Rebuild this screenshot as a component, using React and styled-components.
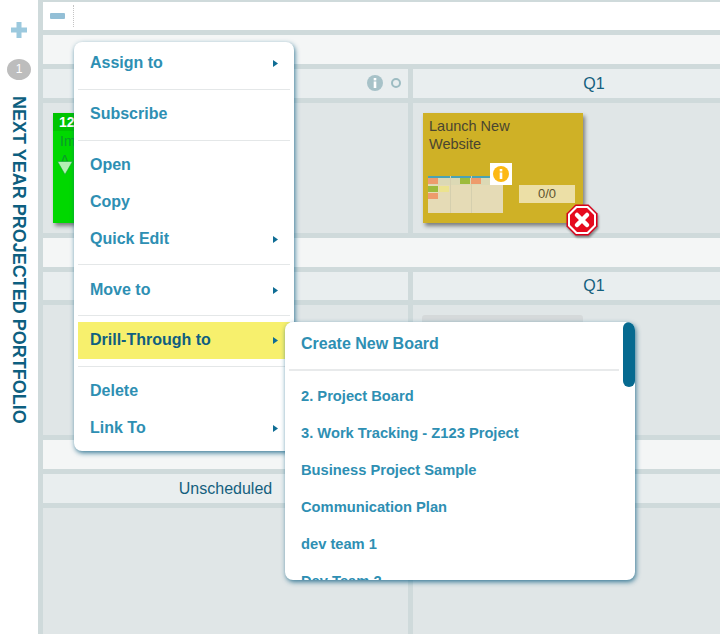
import React from "react";
import styled, { createGlobalStyle } from "styled-components";

const GlobalStyle = createGlobalStyle`
  html, body {
    margin: 0;
    padding: 0;
    background: #fff;
    font-family: "Liberation Sans", Arial, sans-serif;
  }
`;

const Page = styled.div`
  position: relative;
  display: flex;
  width: 720px;
  height: 634px;
  overflow: hidden;
`;

const Sidebar = styled.aside`
  flex: 0 0 38px;
  display: flex;
  flex-direction: column;
  align-items: center;
  padding-top: 22px;
  background: #fff;
  box-sizing: border-box;
`;

const CountBadge = styled.div`
  width: 24px;
  height: 21px;
  margin-top: 21px;
  border-radius: 50%;
  background: #bdbdbd;
  color: #fff;
  font-size: 12px;
  line-height: 21px;
  text-align: center;
`;

const SideTitle = styled.div`
  margin-top: 16px;
  margin-right: 2px;
  writing-mode: vertical-rl;
  color: #0d5f80;
  font-size: 18px;
  font-weight: 700;
  white-space: nowrap;
`;

const Board = styled.main`
  flex: 1;
  min-width: 0;
  display: flex;
  flex-direction: column;
  gap: 5px;
  padding: 2px 0 0 5px;
  background: #cfdadb;
  box-sizing: border-box;
`;

const Toolbar = styled.div`
  flex: 0 0 28px;
  display: flex;
  align-items: center;
  padding-left: 7px;
  background: #fff;
`;

const ToolbarRule = styled.div`
  height: 22px;
  margin-left: 8px;
  border-left: 1px dotted #c4c4c4;
`;

const LaneBar = styled.div`
  flex: 0 0 ${(props) => props.height}px;
  background: #f4f6f6;
`;

const Columns = styled.div`
  flex: ${(props) => (props.grow ? "1" : `0 0 ${props.height}px`)};
  display: grid;
  grid-template-columns: 365px 362px;
  column-gap: 5px;
`;

const ColumnHead = styled.div`
  position: relative;
  display: flex;
  align-items: center;
  justify-content: center;
  background: #e9eeef;
  color: #14607e;
  font-size: 16px;
`;

const HeadIcons = styled.div`
  position: absolute;
  right: 7px;
  top: 6px;
  display: flex;
  align-items: center;
  gap: 8px;
`;

const StatusDot = styled.span`
  width: 6px;
  height: 6px;
  border: 2px solid #9dbcc2;
  border-radius: 50%;
`;

const Cell = styled.div`
  position: relative;
  display: flex;
  padding: 10px;
  min-height: 0;
  background: #e0e6e7;
  box-sizing: border-box;
`;

const GreenCard = styled.div`
  width: 160px;
  height: 110px;
  background: #00d800;
  box-shadow: 2px 3px 4px rgba(0, 0, 0, 0.45);
  color: #0a9a2a;
  font-size: 14px;
`;

const GreenCardHead = styled.div`
  height: 18px;
  padding-left: 6px;
  background: #00c400;
  color: #fff;
  font-size: 14px;
  font-weight: 700;
  line-height: 19px;
`;

const GreenCardBody = styled.div`
  padding: 2px 0 0 7px;
  line-height: 17px;
`;

const CollapseArrow = styled.svg`
  display: block;
  margin: -8px 0 0 4px;
`;

const YellowCard = styled.div`
  position: relative;
  width: 160px;
  height: 110px;
  padding: 4px 6px;
  background: #cfb126;
  box-shadow: 2px 3px 4px rgba(0, 0, 0, 0.45);
  box-sizing: border-box;
  color: #4a4530;
  font-size: 14.5px;
  line-height: 18px;
`;

const CardTitle = styled.div`
  width: 110px;
`;

const CardFooter = styled.div`
  display: flex;
  align-items: flex-start;
  margin-top: 10px;
  margin-left: -1px;
`;

const Thumb = styled.svg`
  display: block;
  flex: none;
  margin-top: 13px;
`;

const CardInfo = styled.div`
  flex: none;
  width: 16px;
  height: 16px;
  margin-left: -13px;
  padding: 3px;
  background: #fff;
  z-index: 1;
`;

const Ratio = styled.div`
  flex: none;
  width: 56px;
  height: 18px;
  margin: 22px 0 0 7px;
  background: #ecdfa6;
  color: #5e5430;
  font-size: 13px;
  line-height: 18px;
  text-align: center;
`;

const ErrorMark = styled.svg`
  position: absolute;
  right: -15px;
  bottom: -13px;
  filter: drop-shadow(1px 2px 1px rgba(0, 0, 0, 0.4));
`;

const PeekCard = styled.div`
  width: 161px;
  height: 40px;
  margin: 0 0 0 -1px;
  border-radius: 3px 3px 0 0;
  background: #d5d9da;
`;

const Menu = styled.div`
  position: absolute;
  left: 74px;
  top: 42px;
  width: 220px;
  height: 409px;
  padding: 3px 4px;
  border-radius: 8px;
  background: #fff;
  box-shadow: 1px 2px 5px rgba(15, 95, 130, 0.8);
  box-sizing: border-box;
`;

const MenuItem = styled.div`
  display: flex;
  align-items: center;
  justify-content: space-between;
  height: 37px;
  padding: 0 12px;
  background: ${(props) => (props.active ? "#f7f06d" : "transparent")};
  color: ${(props) => (props.active ? "#0f5f80" : "#2e8fb3")};
  font-size: 16px;
  font-weight: 700;
`;

const ItemLabel = styled.span`
  position: relative;
  top: -1px;
`;

const MenuRule = styled.div`
  height: 1px;
  margin: ${(props) => props.before}px 0 ${(props) => props.after}px;
  background: #e4e7e8;
`;

const SubMenu = styled.div`
  position: absolute;
  left: 211px;
  top: 280px;
  width: 350px;
  height: 258px;
  padding: 4px 16px 0;
  overflow: hidden;
  border-radius: 8px;
  background: #fff;
  box-shadow: 1px 2px 5px rgba(15, 95, 130, 0.8);
  box-sizing: border-box;
`;

const SubHead = styled.div`
  height: 37px;
  color: #2e8fb3;
  font-size: 16px;
  font-weight: 700;
  line-height: 36px;
`;

const SubRule = styled.div`
  height: 2px;
  margin: 6px 0 7px -12px;
  width: 330px;
  background: #e8eaeb;
`;

const SubItem = styled.div`
  height: 37px;
  color: #2e8fb3;
  font-size: 14.7px;
  font-weight: 700;
  line-height: 36px;
  white-space: nowrap;
`;

const ScrollThumb = styled.div`
  position: absolute;
  top: 0;
  right: 0;
  width: 12px;
  height: 65px;
  border-radius: 6px;
  background: #066a90;
`;

const Arrow = () => (
  <svg width="5" height="7" viewBox="0 0 5 7">
    <path d="M0 0L5 3.5L0 7Z" fill="#0f6d94" />
  </svg>
);

const InfoGlyph = ({ size, fill }) => (
  <svg width={size} height={size} viewBox="0 0 16 16" style={{ display: "block" }}>
    <circle cx="8" cy="8" r="8" fill={fill} />
    <rect x="6.7" y="3" width="2.6" height="2.4" fill="#fff" />
    <rect x="6.7" y="6.5" width="2.6" height="6.5" fill="#fff" />
  </svg>
);

const thumbBlocks = [
  { x: 0, y: 2, fill: "#ee9b6c" },
  { x: 32, y: 2, fill: "#9dbb3c" },
  { x: 43, y: 2, fill: "#ee9b6c" },
  { x: 0, y: 10, fill: "#9dbb3c" },
  { x: 11, y: 10, fill: "#ece38f" },
  { x: 0, y: 17, fill: "#ee9b6c" },
];

const BoardThumb = () => (
  <Thumb width="75" height="37" viewBox="0 0 75 37">
    <rect width="75" height="37" fill="#e5dbb6" />
    <rect width="75" height="9" fill="#dcd9b5" />
    <rect width="75" height="2" fill="#4aa3b5" />
    <rect x="22" width="1" height="37" fill="#d5cfae" />
    <rect x="43" width="1" height="37" fill="#d5cfae" />
    {thumbBlocks.map((block) => (
      <rect key={`${block.x}-${block.y}`} x={block.x} y={block.y} width="10" height="6" fill={block.fill} />
    ))}
  </Thumb>
);

const topItems = [
  { label: "Assign to", more: true },
  { before: 7, after: 6 },
  { label: "Subscribe" },
  { before: 7, after: 6 },
  { label: "Open" },
  { label: "Copy" },
  { label: "Quick Edit", more: true },
  { before: 6, after: 7 },
  { label: "Move to", more: true },
  { before: 6, after: 6 },
  { label: "Drill-Through to", more: true, active: true },
  { before: 7, after: 6 },
  { label: "Delete" },
  { label: "Link To", more: true },
];

const boards = [
  "2. Project Board",
  "3. Work Tracking - Z123 Project",
  "Business Project Sample",
  "Communication Plan",
  "dev team 1",
  "Dev Team 2",
];

export default function App() {
  return (
    <Page>
      <GlobalStyle />
      <Sidebar>
        <svg width="16" height="16" viewBox="0 0 16 16">
          <path d="M5.5 0h5v5.5H16v5h-5.500V16h-5v-5.500H0v-5h5.500z" fill="#9cc9de" />
        </svg>
        <CountBadge>1</CountBadge>
        <SideTitle>NEXT YEAR PROJECTED PORTFOLIO</SideTitle>
      </Sidebar>
      <Board>
        <Toolbar>
          <svg width="15" height="6" viewBox="0 0 15 6">
            <rect width="15" height="6" rx="1" fill="#93bfd6" />
          </svg>
          <ToolbarRule />
        </Toolbar>
        <LaneBar height={29} />
        <Columns height={29}>
          <ColumnHead>
            <HeadIcons>
              <InfoGlyph size={16} fill="#a7c2c8" />
              <StatusDot />
            </HeadIcons>
          </ColumnHead>
          <ColumnHead>Q1</ColumnHead>
        </Columns>
        <Columns height={130}>
          <Cell>
            <GreenCard>
              <GreenCardHead>12</GreenCardHead>
              <GreenCardBody>Im</GreenCardBody>
              <GreenCardBody>A</GreenCardBody>
              <CollapseArrow width="16" height="14" viewBox="0 0 16 14">
                <path d="M0.5 0.5H15.5L8 13.500Z" fill="#b4f0b4" stroke="#0aa82a" strokeWidth="0.6" />
              </CollapseArrow>
            </GreenCard>
          </Cell>
          <Cell>
            <YellowCard>
              <CardTitle>Launch New Website</CardTitle>
              <CardFooter>
                <BoardThumb />
                <CardInfo>
                  <InfoGlyph size={16} fill="#fdb913" />
                </CardInfo>
                <Ratio>0/0</Ratio>
              </CardFooter>
              <ErrorMark width="32" height="32" viewBox="0 0 32 32">
                <path d="M9.500 0.500H22.500L31.500 9.500V22.500L22.500 31.500H9.500L0.500 22.500V9.500Z" fill="#d8001a" />
                <path d="M10 2H22L30 10V22L22 30H10L2 22V10Z" fill="#fff" />
                <path d="M11 4H21L28 11V21L21 28H11L4 21V11Z" fill="#e60a1e" />
                <path d="M11 11L21 21M21 11L11 21" stroke="#fff" strokeWidth="4.500" strokeLinecap="round" />
              </ErrorMark>
            </YellowCard>
          </Cell>
        </Columns>
        <LaneBar height={29} />
        <Columns height={28}>
          <ColumnHead />
          <ColumnHead>Q1</ColumnHead>
        </Columns>
        <Columns height={130}>
          <Cell />
          <Cell>
            <PeekCard />
          </Cell>
        </Columns>
        <LaneBar height={29} />
        <Columns height={29}>
          <ColumnHead>Unscheduled</ColumnHead>
          <ColumnHead />
        </Columns>
        <Columns grow>
          <Cell />
          <Cell />
        </Columns>
      </Board>
      <Menu>
        {topItems.map((item, index) =>
          item.label ? (
            <MenuItem key={item.label} active={item.active}>
              <ItemLabel>{item.label}</ItemLabel>
              {item.more && <Arrow />}
            </MenuItem>
          ) : (
            <MenuRule key={index} before={item.before} after={item.after} />
          )
        )}
        <SubMenu>
          <SubHead>Create New Board</SubHead>
          <SubRule />
          {boards.map((name) => (
            <SubItem key={name}>{name}</SubItem>
          ))}
          <ScrollThumb />
        </SubMenu>
      </Menu>
    </Page>
  );
}
